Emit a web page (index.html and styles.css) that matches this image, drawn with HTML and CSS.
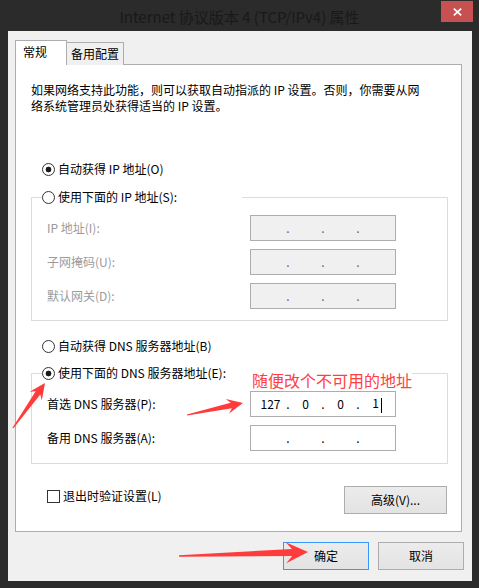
FILE: index.html
```html
<!DOCTYPE html>
<html lang="zh-CN">

<head>
    <meta charset="utf-8">
    <title>Internet 协议版本 4 (TCP/IPv4) 属性</title>
    <link rel="stylesheet" href="styles.css">
</head>

<body>
    <div class="titlebar">
        <div></div>
        <div class="title">Internet 协议版本 4 (TCP/IPv4) 属性</div>
        <div class="close">
            <svg width="9" height="8" viewBox="0 0 9 8">
                <path d="M0.8 0.6 L8.2 7.4 M8.2 0.6 L0.8 7.4" stroke="#fff" stroke-width="1.7" fill="none" />
            </svg>
        </div>
    </div>

    <div class="client">
        <div class="tabs">
            <div class="tab active">常规</div>
            <div class="tab other">备用配置</div>
        </div>

        <div class="panel">
            <p class="intro">如果网络支持此功能，则可以获取自动指派的 IP 设置。否则，你需要从网<br>络系统管理员处获得适当的 IP 设置。</p>

            <div class="option auto-ip">
                <span class="radio on"></span>
                <span>自动获得 IP 地址(O)</span>
            </div>

            <fieldset class="group">
                <legend class="option legend-ip">
                    <span class="radio"></span>
                    <span>使用下面的 IP 地址(S):</span>
                </legend>
                <div class="fields disabled">
                    <label>IP 地址(I):</label>
                    <div class="ip-field">
                        <span class="oct"></span><span class="dot">.</span><span class="oct"></span><span class="dot">.</span><span class="oct"></span><span class="dot">.</span><span class="oct"></span>
                    </div>
                    <label>子网掩码(U):</label>
                    <div class="ip-field">
                        <span class="oct"></span><span class="dot">.</span><span class="oct"></span><span class="dot">.</span><span class="oct"></span><span class="dot">.</span><span class="oct"></span>
                    </div>
                    <label>默认网关(D):</label>
                    <div class="ip-field">
                        <span class="oct"></span><span class="dot">.</span><span class="oct"></span><span class="dot">.</span><span class="oct"></span><span class="dot">.</span><span class="oct"></span>
                    </div>
                </div>
            </fieldset>

            <div class="option auto-dns">
                <span class="radio"></span>
                <span>自动获得 DNS 服务器地址(B)</span>
            </div>

            <fieldset class="group dns">
                <legend class="option legend-dns">
                    <span class="radio on"></span>
                    <span>使用下面的 DNS 服务器地址(E):</span>
                </legend>
                <div class="fields">
                    <label>首选 DNS 服务器(P):</label>
                    <div class="ip-field">
                        <span class="oct">127</span><span class="dot">.</span><span class="oct">0</span><span class="dot">.</span><span class="oct">0</span><span class="dot">.</span><span class="oct">1<span class="caret"></span></span>
                    </div>
                    <label>备用 DNS 服务器(A):</label>
                    <div class="ip-field">
                        <span class="oct"></span><span class="dot">.</span><span class="oct"></span><span class="dot">.</span><span class="oct"></span><span class="dot">.</span><span class="oct"></span>
                    </div>
                </div>
            </fieldset>

            <div class="panel-foot">
                <div class="check">
                    <span class="box"></span>
                    <span>退出时验证设置(L)</span>
                </div>
                <button class="btn adv">高级(V)...</button>
            </div>
        </div>

        <div class="actions">
            <button class="btn main">确定</button>
            <button class="btn">取消</button>
        </div>
    </div>

    <!-- annotations drawn over the dialog -->
    <div class="note">随便改个不可用的地址</div>
    <svg class="marks" width="479" height="588" viewBox="0 0 479 588">
        <polygon fill="#ff3b3b" points="12.5,427.7 35.7,391.2 29.6,391.7 45,383 41.8,400.4 40.3,394.4 13.5,428.3" />
        <polygon fill="#ff3b3b" points="186.9,414.4 230.7,402.8 225.8,399 243,403 229,413.6 231.9,408.2 187.1,415.6" />
        <polygon fill="#ff3b3b" points="179,555.3 291.9,549 285.7,542.2 308,552 286.3,563.2 292.1,556 179,556.7" />
    </svg>
</body>

</html>
```

FILE: styles.css
```css
body {
    margin: 0;
    width: 479px;
    height: 588px;
    overflow: hidden;
    position: relative;
    background-color: #2b2b2b;
    font-family: "Noto Sans CJK SC", "Noto Sans", sans-serif;
    font-size: 12px;
    line-height: 16px;
    color: #000;
}

.titlebar {
    display: grid;
    grid-template-columns: 38px 1fr 38px;
    height: 31px;
}

.title {
    text-align: center;
    color: #191919;
    font-size: 15px;
    line-height: 20px;
    padding-top: 7px;
}

.close {
    width: 32px;
    height: 21px;
    margin-top: 1px;
    background-color: #c75050;
    display: flex;
    align-items: center;
    justify-content: center;
}

.client {
    margin: 0 7px 0 8px;
    height: 550px;
    box-sizing: border-box;
    padding: 9px 0 0 7px;
    background-color: #f0f0f0;
}

.tabs {
    display: flex;
    align-items: flex-end;
    margin-bottom: -1px;
}

.tab {
    box-sizing: border-box;
    border: 1px solid #adadad;
    border-bottom: 0;
    line-height: 22px;
}

.tab.active {
    position: relative;
    z-index: 1;
    width: 52px;
    height: 25px;
    padding-left: 7px;
    background-color: #fff;
}

.tab.other {
    width: 58px;
    height: 23px;
    margin-left: -1px;
    padding-left: 4px;
    background-color: #f0f0f0;
}

.panel {
    width: 447px;
    height: 468px;
    box-sizing: border-box;
    border: 1px solid #adadad;
    background-color: #fff;
    padding: 17px 0 0 15px;
}

.intro {
    margin: 0;
}

.option {
    display: flex;
    align-items: center;
    height: 16px;
}

.auto-ip {
    margin-top: 47px;
    padding-left: 11px;
}

.auto-dns {
    margin-top: 17px;
    padding-left: 11px;
}

.radio {
    width: 13px;
    height: 13px;
    box-sizing: border-box;
    border: 1px solid #333;
    border-radius: 50%;
    background-color: #fff;
    margin-right: 3px;
}

.radio.on {
    background: radial-gradient(circle, #1a1a1a 0 2.6px, #fff 3.2px);
}

.group {
    width: 417px;
    box-sizing: border-box;
    margin: 12px 0 0;
    padding: 0 0 11px;
    border: 1px solid #dcdcdc;
}

.group.dns {
    margin-top: 11px;
    padding-bottom: 12px;
}

.group legend {
    padding: 0;
    margin-left: 10px;
}

.legend-ip {
    width: 200px;
}

.legend-dns {
    width: 210px;
}

.fields {
    display: grid;
    grid-template-columns: 203px 146px;
    grid-auto-rows: 26px;
    row-gap: 8px;
    align-items: center;
    margin-top: 10px;
    padding-left: 15px;
}

.fields.disabled label {
    color: #9b9b9b;
}

.ip-field {
    height: 26px;
    box-sizing: border-box;
    border: 1px solid #adadad;
    background-color: #fff;
    display: flex;
    align-items: center;
    padding-left: 5px;
}

.fields.disabled .ip-field {
    background-color: #f0f0f0;
}

.fields.disabled .dot {
    color: #666;
}

.oct {
    width: 29px;
    text-align: center;
}

.dot {
    width: 6px;
    text-align: center;
}

.caret {
    display: inline-block;
    width: 1px;
    height: 15px;
    background-color: #000;
    margin-left: 2px;
    margin-right: -3px;
    vertical-align: middle;
}

.panel-foot {
    width: 417px;
    box-sizing: border-box;
    display: flex;
    justify-content: space-between;
    align-items: flex-start;
    margin-top: 22px;
    padding: 0 1px 0 16px;
}

.check {
    display: flex;
    align-items: center;
    height: 16px;
    margin-top: 2px;
}

.check .box {
    width: 13px;
    height: 13px;
    box-sizing: border-box;
    border: 1px solid #333;
    background-color: #fff;
    margin-right: 3px;
}

.btn {
    height: 28px;
    width: 86px;
    box-sizing: border-box;
    border: 1px solid #adadad;
    background: linear-gradient(#ececec, #e3e3e3);
    font: inherit;
    color: #000;
    padding: 0;
    display: flex;
    align-items: center;
    justify-content: center;
}

.btn.adv {
    width: 103px;
}

.btn.main {
    border-color: #3399ff;
}

.actions {
    display: flex;
    justify-content: flex-end;
    gap: 9px;
    margin-top: 10px;
    padding-right: 8px;
}

.note {
    position: absolute;
    left: 252px;
    top: 371px;
    color: #ff4040;
    font-size: 16px;
    line-height: 18px;
    background-color: #fff;
}

.marks {
    position: absolute;
    left: 0;
    top: 0;
    pointer-events: none;
}
```
